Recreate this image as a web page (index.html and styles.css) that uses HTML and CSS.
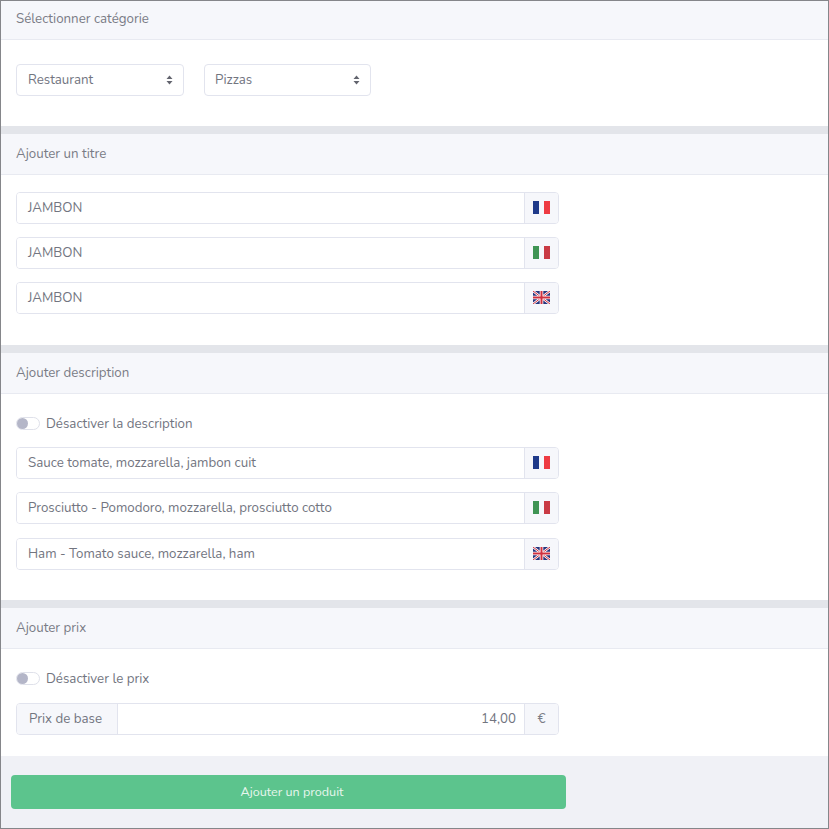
FILE: index.html
```html
<!DOCTYPE html>
<html lang="fr">
<head>
<meta charset="utf-8">
<title>Ajouter un produit</title>
<link rel="stylesheet" href="styles.css">
</head>
<body>
<svg class="defs" width="0" height="0" aria-hidden="true">
  <defs>
    <symbol id="fr" viewBox="0 0 17 13">
      <rect width="6" height="13" fill="#1f3a8a"/>
      <rect x="11" width="6" height="13" fill="#ee3b42"/>
    </symbol>
    <symbol id="it" viewBox="0 0 17 13">
      <rect width="6" height="13" fill="#3f9454"/>
      <rect x="11" width="6" height="13" fill="#c93a44"/>
    </symbol>
    <symbol id="uk" viewBox="0 0 17 13">
      <rect width="17" height="13" fill="#27357e"/>
      <path d="M0 0L17 13M17 0L0 13" stroke="#fff" stroke-width="2.4"/>
      <path d="M0 0L17 13M17 0L0 13" stroke="#d0303f" stroke-width="1"/>
      <path d="M8.5 0V13M0 6.5H17" stroke="#fff" stroke-width="3.6"/>
      <path d="M8.5 0V13M0 6.5H17" stroke="#d0303f" stroke-width="2"/>
    </symbol>
  </defs>
</svg>
<main class="frame">
  <section class="card">
    <h2 class="card-head">Sélectionner catégorie</h2>
    <div class="card-body body-cat">
      <div class="select"><span>Restaurant</span><svg class="caret" viewBox="0 0 7 10"><path d="M3.5 0.5L6.5 4H0.5Z M3.5 9.5L0.5 6H6.5Z"/></svg></div>
      <div class="select"><span>Pizzas</span><svg class="caret" viewBox="0 0 7 10"><path d="M3.5 0.5L6.5 4H0.5Z M3.5 9.5L0.5 6H6.5Z"/></svg></div>
    </div>
  </section>
  <section class="card">
    <h2 class="card-head">Ajouter un titre</h2>
    <div class="card-body body-title">
      <div class="group"><div class="field">JAMBON</div><div class="addon"><svg class="flag"><use href="#fr"/></svg></div></div>
      <div class="group"><div class="field">JAMBON</div><div class="addon"><svg class="flag"><use href="#it"/></svg></div></div>
      <div class="group"><div class="field">JAMBON</div><div class="addon"><svg class="flag"><use href="#uk"/></svg></div></div>
    </div>
  </section>
  <section class="card">
    <h2 class="card-head">Ajouter description</h2>
    <div class="card-body body-desc">
      <div class="switch-row"><span class="switch"></span><span class="switch-label">Désactiver la description</span></div>
      <div class="group"><div class="field">Sauce tomate, mozzarella, jambon cuit</div><div class="addon"><svg class="flag"><use href="#fr"/></svg></div></div>
      <div class="group"><div class="field">Prosciutto - Pomodoro, mozzarella, prosciutto cotto</div><div class="addon"><svg class="flag"><use href="#it"/></svg></div></div>
      <div class="group group-last"><div class="field">Ham - Tomato sauce, mozzarella, ham</div><div class="addon"><svg class="flag"><use href="#uk"/></svg></div></div>
    </div>
  </section>
  <section class="card card-last">
    <h2 class="card-head">Ajouter prix</h2>
    <div class="card-body body-price">
      <div class="switch-row switch-row-price"><span class="switch"></span><span class="switch-label">Désactiver le prix</span></div>
      <div class="group"><div class="addon addon-label">Prix de base</div><div class="field field-num">14,00</div><div class="addon addon-end">€</div></div>
    </div>
  </section>
  <footer class="foot">
    <button class="submit" type="button">Ajouter un produit</button>
  </footer>
</main>
</body>
</html>
```
FILE: styles.css
```css
* { box-sizing: border-box; }
html, body { margin: 0; padding: 0; }
body {
  width: 829px;
  height: 829px;
  overflow: hidden;
  background: #fff;
  font-family: "Nunito", "Lato", "Noto Sans", sans-serif;
  font-size: 13.3px;
  color: #72757f;
}
.defs { position: absolute; }
.frame {
  height: 829px;
  border: 1px solid #85868a;
  display: flex;
  flex-direction: column;
  background: #e3e5ea;
}
.card { background: #fff; margin-bottom: 8px; }
.card-last { margin-bottom: 0; }
.card-head {
  margin: 0;
  height: 39px;
  padding: 0 15px 2px;
  display: flex;
  align-items: center;
  font-size: 13.3px;
  font-weight: 400;
  background: #f6f7fb;
  border-bottom: 1px solid #e8eaf1;
  color: #7a7c86;
}
.card:nth-child(n+2) .card-head { height: 41px; padding-bottom: 0; }
.card-body { padding: 0 15px; }
.body-cat { display: flex; gap: 20px; height: 86px; padding-top: 24px; }
.body-title { height: 170px; padding-top: 17px; }
.body-desc { height: 206px; padding-top: 20px; }
.body-price { height: 107px; padding-top: 20px; }
.select {
  width: 168px;
  height: 32px;
  padding: 0 10px 0 11px;
  display: flex;
  align-items: center;
  justify-content: space-between;
  background: #fff;
  border: 1px solid #e2e4ee;
  border-radius: 4px;
}
.select:nth-child(2) { width: 167px; padding-left: 10px; }
.caret { width: 7px; height: 10px; fill: #62646e; }
.group {
  width: 543px;
  height: 32px;
  display: flex;
  margin-bottom: 13px;
  border: 1px solid #e2e4ee;
  border-radius: 4px;
  overflow: hidden;
}
.group-last { margin-top: 14px; }
.field {
  flex: 1;
  padding: 0 10px 1px 11px;
  display: flex;
  align-items: center;
  background: #fff;
}
.field-num { justify-content: flex-end; padding-right: 8px; }
.addon {
  width: 34px;
  padding-bottom: 1px;
  display: flex;
  align-items: center;
  justify-content: center;
  background: #f6f7fb;
  border-left: 1px solid #e2e4ee;
}
.addon-label { width: 101px; padding-right: 3px; padding-bottom: 0; border-left: 0; border-right: 1px solid #e2e4ee; }
.addon-end { color: #7a7c86; }
.flag { width: 17px; height: 13px; }
.switch-row {
  height: 18px;
  margin-bottom: 15px;
  display: flex;
  align-items: center;
  gap: 6px;
}
.switch-row-price { margin-bottom: 16px; }
.switch-label { padding-top: 1px; }
.switch {
  width: 24px;
  height: 13px;
  border: 1px solid #dfe1ea;
  border-radius: 7px;
  background: #fff;
  display: flex;
}
.switch::before {
  content: "";
  width: 11px;
  height: 11px;
  border-radius: 50%;
  background: #b4b6c8;
}
.foot {
  flex: 1;
  background: #f0f1f6;
  padding: 19px 10px;
}
.submit {
  display: block;
  width: 555px;
  height: 34px;
  padding: 0 0 2px 7px;
  border: 0;
  border-radius: 4px;
  background: #5cc48d;
  color: #e8f6ee;
  font: inherit;
  font-size: 12.6px;
}
```
